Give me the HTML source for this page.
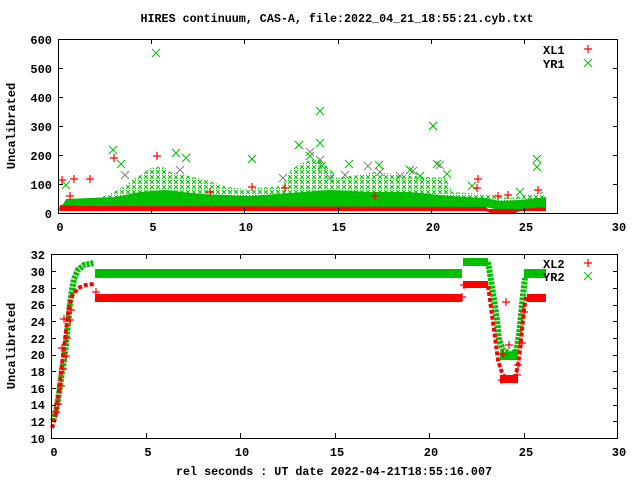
<!DOCTYPE html>
<html><head><meta charset="utf-8"><style>
html,body{margin:0;padding:0;background:#fff;width:640px;height:480px;overflow:hidden}
svg text{font-family:"Liberation Mono",monospace;font-weight:bold;font-size:12px;fill:#000}
</style></head><body>
<svg width="640" height="480" viewBox="0 0 640 480" xmlns="http://www.w3.org/2000/svg">
<defs>
<pattern id="gx" width="6" height="5" patternUnits="userSpaceOnUse">
<path d="M0 0L4 4M4 0L0 4" stroke="#00c000" stroke-width="1"/>
</pattern>
<symbol id="p" overflow="visible"><path d="M-4 0H4M0 -4V4" stroke="#ff0000" stroke-width="1.2"/></symbol>
<symbol id="x" overflow="visible"><path d="M-4 -4L4 4M4 -4L-4 4" stroke="#00c000" stroke-width="1"/></symbol>
<symbol id="gr" overflow="visible"><path d="M-4 -4L4 4M4 -4L-4 4" stroke="#808080" stroke-width="1"/></symbol>
</defs>

<text x="337" y="22" text-anchor="middle" textLength="393" lengthAdjust="spacingAndGlyphs">HIRES continuum, CAS-A, file:2022_04_21_18:55:21.cyb.txt</text>

<!-- ===== TOP PLOT ===== -->
<g>
<use href="#gr" x="299" y="145"/><use href="#gr" x="310" y="152"/><use href="#gr" x="252" y="159"/>
<use href="#gr" x="433" y="126"/><use href="#gr" x="368" y="166"/><use href="#gr" x="320" y="160"/>
<use href="#gr" x="125" y="175"/><use href="#gr" x="380" y="172"/><use href="#gr" x="413" y="171"/>
<use href="#gr" x="330" y="178"/><use href="#gr" x="400" y="176"/><use href="#gr" x="440" y="165"/>
<use href="#gr" x="283" y="178"/><use href="#gr" x="180" y="170"/><use href="#gr" x="345" y="175"/>
</g>
<polygon fill="url(#gx)" points="62,204 100,198 118,190 135,178 151,168 162,166 170,172 189,176 207,180 226,187 245,189 282,186 291,170 301,163 319,158 329,168 338,178 375,172 413,176 446,178 452,192 487,194 510,198 543,192 546,206 60,207"/>
<polygon fill="#00c000" points="62,206 66,199 90,198 115,197 140,192 165,190 200,194 250,196 290,193 330,190 370,192 410,192 450,196 485,198 500,201 520,200 546,197 546,207 520,210 500,210 485,207 62,207"/>
<polygon fill="#ff0000" points="59,210 60,205 80,206 486,207 488,209 520,209 546,207 546,211 520,211 515,213 490,213 486,211 60,211"/>
<g>
<use href="#x" x="156" y="53"/><use href="#x" x="320" y="111"/><use href="#x" x="433" y="126"/>
<use href="#x" x="299" y="145"/><use href="#x" x="320" y="143"/><use href="#x" x="176" y="153"/>
<use href="#x" x="113" y="150"/><use href="#x" x="252" y="159"/>
<use href="#x" x="537" y="159"/><use href="#x" x="537" y="167"/><use href="#x" x="437" y="164"/>
<use href="#x" x="379" y="165"/><use href="#x" x="349" y="164"/><use href="#x" x="410" y="170"/>
<use href="#x" x="447" y="174"/><use href="#x" x="66" y="185"/><use href="#x" x="121" y="164"/>
<use href="#x" x="186" y="158"/><use href="#x" x="310" y="156"/><use href="#x" x="322" y="166"/>
<use href="#x" x="420" y="176"/><use href="#x" x="472" y="186"/><use href="#x" x="520" y="192"/>
</g>
<g>
<use href="#p" x="62" y="180"/><use href="#p" x="74" y="179"/><use href="#p" x="90" y="179"/>
<use href="#p" x="114" y="158"/><use href="#p" x="157" y="156"/><use href="#p" x="478" y="179"/>
<use href="#p" x="477" y="188"/><use href="#p" x="538" y="190"/><use href="#p" x="508" y="195"/>
<use href="#p" x="498" y="196"/><use href="#p" x="375" y="196"/><use href="#p" x="285" y="188"/>
<use href="#p" x="252" y="187"/><use href="#p" x="210" y="192"/><use href="#p" x="70" y="196"/>
</g>
<rect x="58.5" y="39.5" width="559" height="174" fill="none" stroke="#000"/>
<path stroke="#000" d="M58 68.5h5M618 68.5h-5M58 97.5h5M618 97.5h-5M58 126.5h5M618 126.5h-5M58 155.5h5M618 155.5h-5M58 184.5h5M618 184.5h-5
M151.5 213v-5M151.5 39v5M244.5 213v-5M244.5 39v5M338.5 213v-5M338.5 39v5M431.5 213v-5M431.5 39v5M524.5 213v-5M524.5 39v5"/>
<g text-anchor="end">
<text x="52" y="44">600</text><text x="52" y="73">500</text><text x="52" y="102">400</text>
<text x="52" y="131">300</text><text x="52" y="160">200</text><text x="52" y="189">100</text><text x="52" y="218">0</text>
</g>
<g text-anchor="middle">
<text x="60" y="231">0</text><text x="153" y="231">5</text><text x="246" y="231">10</text>
<text x="339" y="231">15</text><text x="433" y="231">20</text><text x="526" y="231">25</text><text x="619" y="231">30</text>
</g>
<text transform="translate(15,126) rotate(-90)" text-anchor="middle">Uncalibrated</text>
<text x="543" y="54">XL1</text><use href="#p" x="588" y="49"/>
<text x="543" y="68">YR1</text><use href="#x" x="588" y="63"/>

<!-- ===== BOTTOM PLOT ===== -->
<polyline fill="none" stroke="#00c000" stroke-width="6" stroke-dasharray="3 1" points="53,421 56,412 58,400 60,386 62,372 64,360 66,344 68,325 70,303 72,290 74,279 78,270 84,265 94,263"/>
<rect x="95" y="269" width="367" height="9" fill="#00c000"/>
<rect x="463" y="258" width="25" height="8" fill="#00c000"/>
<polyline fill="none" stroke="#00c000" stroke-width="6" stroke-dasharray="3 1" points="488,262 491,280 494,300 497,320 499,340 503,350 510,354 516,352 519,335 521,315 523,295 525,278"/>
<rect x="500" y="352" width="18" height="8" fill="#00c000"/>
<rect x="524" y="269" width="22" height="9" fill="#00c000"/>
<polyline fill="none" stroke="#ff0000" stroke-width="4" stroke-dasharray="4 2" points="52,428 55,418 57,405 59,392 61,372 63,355 65,340 67,322 69,307 72,296 78,288 86,285 94,284"/>
<rect x="95" y="294" width="367" height="8" fill="#ff0000"/>
<rect x="463" y="281" width="25" height="7" fill="#ff0000"/>
<polyline fill="none" stroke="#ff0000" stroke-width="4" stroke-dasharray="4 2" points="488,286 490,300 492,315 494,330 496,345 498,360 501,370 505,378"/>
<rect x="500" y="375" width="18" height="8" fill="#ff0000"/>
<polyline fill="none" stroke="#ff0000" stroke-width="4" stroke-dasharray="4 2" points="515,378 518,365 520,350 522,330 524,310 526,297"/>
<rect x="527" y="294" width="19" height="8" fill="#ff0000"/>
<g>
<use href="#p" x="56" y="412"/><use href="#p" x="58" y="404"/><use href="#p" x="61" y="386"/>
<use href="#p" x="63" y="369"/><use href="#p" x="66" y="356"/><use href="#p" x="67" y="338"/>
<use href="#p" x="62" y="348"/><use href="#p" x="64" y="319"/><use href="#p" x="71" y="310"/>
<use href="#p" x="70" y="320"/><use href="#p" x="96" y="292"/><use href="#p" x="462" y="297"/>
<use href="#p" x="464" y="285"/><use href="#p" x="506" y="302"/><use href="#p" x="509" y="345"/>
<use href="#p" x="503" y="354"/><use href="#p" x="502" y="380"/><use href="#p" x="518" y="365"/>
<use href="#p" x="517" y="375"/><use href="#p" x="522" y="343"/><use href="#p" x="524" y="312"/>
</g>
<rect x="51.5" y="254.5" width="566" height="184" fill="none" stroke="#000"/>
<path stroke="#000" d="M51 271.5h5M618 271.5h-5M51 288.5h5M618 288.5h-5M51 305.5h5M618 305.5h-5M51 321.5h5M618 321.5h-5M51 338.5h5M618 338.5h-5M51 355.5h5M618 355.5h-5M51 371.5h5M618 371.5h-5M51 388.5h5M618 388.5h-5M51 405.5h5M618 405.5h-5M51 421.5h5M618 421.5h-5
M146.5 438v-5M146.5 254v5M240.5 438v-5M240.5 254v5M335.5 438v-5M335.5 254v5M429.5 438v-5M429.5 254v5M524.5 438v-5M524.5 254v5"/>
<g text-anchor="end">
<text x="45" y="259">32</text><text x="45" y="276">30</text><text x="45" y="293">28</text>
<text x="45" y="309">26</text><text x="45" y="326">24</text><text x="45" y="343">22</text>
<text x="45" y="359">20</text><text x="45" y="376">18</text><text x="45" y="393">16</text>
<text x="45" y="409">14</text><text x="45" y="426">12</text><text x="45" y="443">10</text>
</g>
<g text-anchor="middle">
<text x="54" y="456">0</text><text x="148" y="456">5</text><text x="242" y="456">10</text>
<text x="337" y="456">15</text><text x="431" y="456">20</text><text x="526" y="456">25</text><text x="619" y="456">30</text>
</g>
<text transform="translate(15,346) rotate(-90)" text-anchor="middle">Uncalibrated</text>
<text x="334" y="475" text-anchor="middle" textLength="316" lengthAdjust="spacingAndGlyphs">rel seconds : UT date 2022-04-21T18:55:16.007</text>
<text x="543" y="268">XL2</text><use href="#p" x="588" y="263"/>
<text x="543" y="281">YR2</text><use href="#x" x="588" y="276"/>
</svg>
</body></html>
